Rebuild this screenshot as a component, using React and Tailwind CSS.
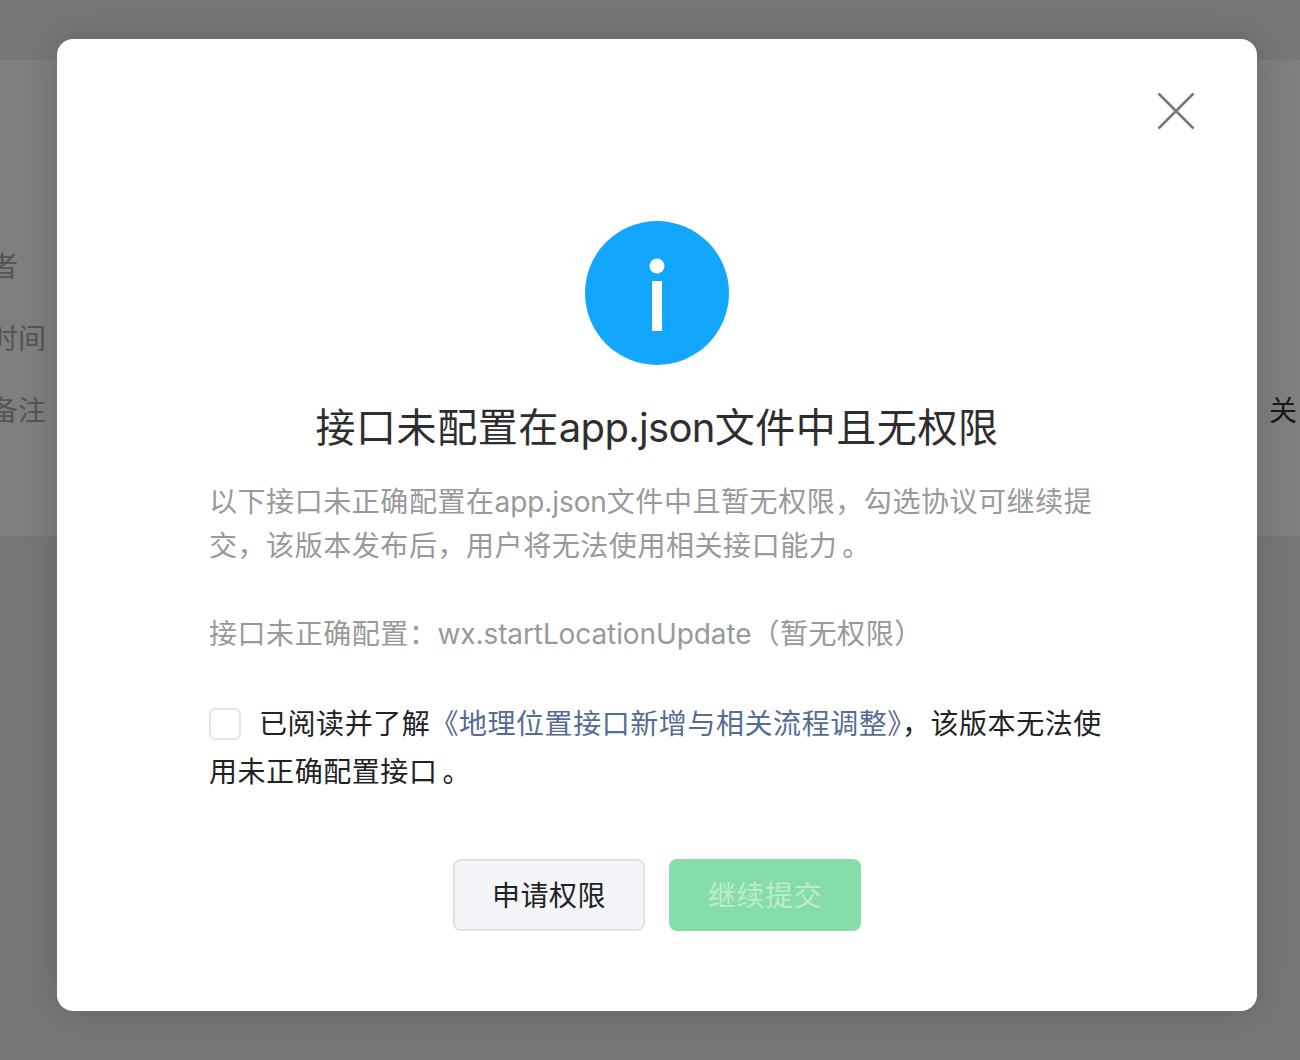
import React from "react";

const fontStack = "font-['Inter','Noto_Sans_CJK_SC',sans-serif]";

const App = () => {
  return (
    <div className={`relative h-[1060px] overflow-hidden bg-[#edeff3] text-[28px] tracking-[0.02em] ${fontStack}`}>
      {/* Page behind the dialog */}
      <div className="mt-[60px] h-[477px] border-b border-[#e6e6e6] bg-white pt-[171px] leading-[72px] tracking-normal text-[#aaaaaa]">
        <div className="-ml-[66px] whitespace-nowrap">开发者</div>
        <div className="-ml-[66px] whitespace-nowrap">提交时间</div>
        <div className="flex justify-between pr-[3px]">
          <span className="-ml-[66px] whitespace-nowrap">提审备注</span>
          <span className="text-[#333333]">关</span>
        </div>
      </div>

      {/* Overlay */}
      <div className="absolute inset-0 bg-black/50 pt-[39px] pl-[57px]">
        <div className="h-[972px] w-[1200px] rounded-2xl bg-white pt-px shadow-[0_0_36px_rgba(0,0,0,0.18)]">
          <div className="flex justify-end pt-[52px] pr-[62px]">
            <svg width="38" height="38" viewBox="0 0 38 38" fill="none" stroke="#7a7a7a" strokeWidth="2.6">
              <path d="M1.5 1.5 L36.5 36.5 M36.5 1.5 L1.5 36.5" />
            </svg>
          </div>

          <div className="mt-[91px] flex justify-center">
            <svg width="144" height="144" viewBox="0 0 144 144">
              <circle cx="72" cy="72" r="72" fill="#13a6ff" />
              <circle cx="72" cy="45" r="7.5" fill="#fff" />
              <rect x="67" y="60" width="10" height="50" fill="#fff" />
            </svg>
          </div>

          <h1 className="mt-[35px] text-center text-[40px] leading-[56px] font-normal text-[#2e2e2e]">
            接口未配置在<span className="tracking-[-0.7px]">app.json</span>文件中且无权限
          </h1>

          <div className="mx-[152px]">
            <p className="mt-[24px] leading-[44px] text-[#999999]">
              以下接口未正确配置在<span className="tracking-[-0.1px]">app.json</span>文件中且暂无权限，勾选协议可继续提交，该版本发布后，用户将无法使用相关接口能力<span className="ml-[5px]">。</span>
            </p>
            <p className="mt-[44px] leading-[44px] text-[#999999]">
              接口未正确配置：<span className="tracking-[-0.1px]">wx.startLocationUpdate</span>（暂无权限）
            </p>
            <p className="mt-[44px] leading-[48px] text-[#222222]">
              <span className="mr-[18px] inline-block h-8 w-8 rounded-md border-2 border-[#e3e3e3] align-[-6px]"></span>
              已阅读并了解<span className="text-[#576b95]">《地理位置接口新增与相关流程调整》</span>，该版本无法使用未正确配置接口<span className="ml-[5px]">。</span>
            </p>
          </div>

          <div className="mt-[63px] flex justify-center gap-6">
            <button className="h-[72px] w-[192px] rounded-lg border-2 border-[#e1e1e3] bg-[#f4f5f8] pt-px text-[#222222]">
              申请权限
            </button>
            <button className="h-[72px] w-[192px] rounded-lg bg-[#87dda9] pt-px text-[#bdeccf]">
              继续提交
            </button>
          </div>
        </div>
      </div>
    </div>
  );
};

export default App;
